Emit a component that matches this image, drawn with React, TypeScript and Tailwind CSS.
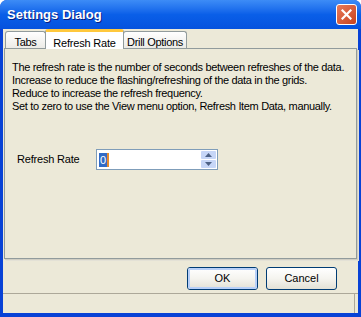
const font = { fontFamily: '"Liberation Sans", Arial, sans-serif' };

const Tab = ({ label, active, w }: { label: string; active?: boolean; w: string }) =>
  active ? (
    <div className={`relative z-10 -mb-px -mx-[1px] h-[20px] ${w} flex justify-center items-start pt-[3px] bg-white border-x border-[#919B9C] border-t-[3px] border-t-[#FFC83C] rounded-t-[3px] text-[11px] tracking-[-0.2px] text-black`}>
      {label}
    </div>
  ) : (
    <div className={`mt-[2px] h-[17px] ${w} flex justify-center items-start pt-[2px] bg-gradient-to-b from-white to-[#ECEBE6] border border-b-0 border-[#919B9C] rounded-t-[3px] text-[11px] tracking-[-0.3px] text-black`}>
      {label}
    </div>
  );

const XpButton = ({ label, def }: { label: string; def?: boolean }) => (
  <div className="w-[71px] h-[23px] rounded-[3px] border border-[#003C74] bg-gradient-to-b from-white via-[#F5F4EF] to-[#E3E1D6] flex items-center justify-center text-[11px] text-black">
    <div
      className={
        def
          ? "w-full h-full rounded-[2px] border-[2px] border-[#B8D0F8] flex items-center justify-center"
          : "w-full h-full flex items-center justify-center"
      }
    >
      {label}
    </div>
  </div>
);

export default function App() {
  return (
    <div
      className="w-[361px] h-[317px] flex flex-col bg-[#0842D6] rounded-t-[7px] overflow-hidden"
      style={font}
    >
      {/* title bar */}
      <div className="h-[29px] shrink-0 flex items-center justify-between pl-[7px] pr-[4px] bg-gradient-to-b from-[#3D8CF6] via-[#0A5FE8] to-[#0552DE]">
        <span className="text-white font-bold text-[13px] [text-shadow:1px_1px_0_#0A1E80]">
          Settings Dialog
        </span>
        <div className="w-[21px] h-[21px] rounded-[3px] border border-white bg-gradient-to-br from-[#E87A5A] to-[#C8421B] flex items-center justify-center">
          <svg width="11" height="11" viewBox="0 0 11 11">
            <path d="M1.5 1.5 L9.5 9.5 M9.5 1.5 L1.5 9.5" stroke="white" strokeWidth="2.2" strokeLinecap="square" />
          </svg>
        </div>
      </div>

      {/* body */}
      <div className="flex-1 mx-[3px] mb-[4px] bg-[#ECE9D8] flex flex-col">
        {/* tabs */}
        <div className="flex items-end pl-[2px] h-[19px] shrink-0">
          <Tab label="Tabs" w="w-[41px]" />
          <Tab label="Refresh Rate" w="w-[79px]" active />
          <Tab label="Drill Options" w="w-[64px]" />
        </div>

        {/* pane */}
        <div className="mx-[1px] h-[211px] shrink-0 border border-[#919B9C] bg-[#ECE9D8] shadow-[1px_1px_0_#D0CEC3,2px_2px_0_#E3E1D6] px-[7px] pt-[12px]">
          <div className="text-[11px] leading-[13px] tracking-[-0.33px] text-black whitespace-nowrap">
            <p>The refresh rate is the number of seconds between refreshes of the data.</p>
            <p>Increase to reduce the flashing/refreshing of the data in the grids.</p>
            <p>Reduce to increase the refresh frequency.</p>
            <p>Set to zero to use the View menu option, Refresh Item Data, manually.</p>
          </div>
          <div className="flex items-center mt-[36px] pl-[5px]">
            <span className="w-[79px] text-[11px] tracking-[-0.2px] text-black">Refresh Rate</span>
            <div className="w-[122px] h-[21px] border border-[#7F9DB9] bg-white flex items-center justify-between pl-[2px] pr-[1px]">
              <span className="bg-[#316AC5] text-white text-[11px] leading-[14px] px-[1px] border-r-2 border-[#E68B2C]">0</span>
              <div className="flex flex-col gap-[1px]">
                <div className="w-[15px] h-[8px] bg-[#C6D6F7] rounded-[1px] flex items-center justify-center">
                  <svg width="7" height="4" viewBox="0 0 7 4"><path d="M0 4 L3.5 0 L7 4 Z" fill="#4D6185" /></svg>
                </div>
                <div className="w-[15px] h-[8px] bg-[#C6D6F7] rounded-[1px] flex items-center justify-center">
                  <svg width="7" height="4" viewBox="0 0 7 4"><path d="M0 0 L3.5 4 L7 0 Z" fill="#4D6185" /></svg>
                </div>
              </div>
            </div>
          </div>
        </div>

        {/* buttons */}
        <div className="flex justify-end gap-[8px] pr-[21px] mt-[8px]">
          <XpButton label="OK" def />
          <XpButton label="Cancel" />
        </div>

        {/* status strip */}
        <div className="mt-auto h-[20px] border-t border-[#ACA899] flex justify-end">
          <div className="w-[2px] h-full border-l border-[#ACA899] mr-[2px]" />
        </div>
      </div>
    </div>
  );
}
